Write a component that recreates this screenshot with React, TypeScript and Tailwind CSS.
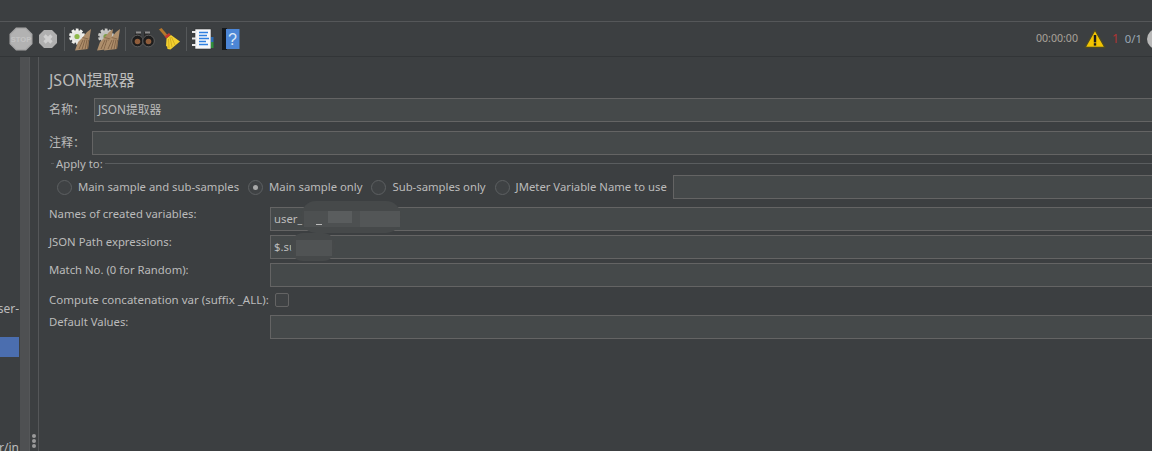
import React from "react";

const font = { fontFamily: '"Noto Sans","Noto Sans CJK SC",sans-serif' };

function Stop() {
  return (
    <svg width="24" height="24" viewBox="0 0 24 24">
      <polygon points="7,0.5 17,0.5 23.5,7 23.5,17 17,23.5 7,23.5 0.5,17 0.5,7" fill="#a6a6a6" />
      <polygon points="7.5,2 16.5,2 22,7.5 22,16.5 16.5,22 7.5,22 2,16.5 2,7.5" fill="#b2b2b2" />
      <text x="12" y="15" textAnchor="middle" fontSize="7.5" fontWeight="700" fill="#c4c4c4" fontFamily="Liberation Sans">STOP</text>
    </svg>
  );
}
function Shut() {
  return (
    <svg width="20" height="20" viewBox="0 0 20 20">
      <polygon points="6,1 14,1 19,6 19,14 14,19 6,19 1,14 1,6" fill="#b0b0b0" />
      <path d="M6.5 6.5l7 7M13.5 6.5l-7 7" stroke="#cfcfcf" strokeWidth="3.2" />
    </svg>
  );
}
function BroomShape({ dx = 0 }: { dx?: number }) {
  return (
    <g transform={`translate(${dx} 0)`}>
      <path d="M23 2l-1.5 9.5L20 22 7 23.5 10 15l4.5-4.5L19 5z" fill="#ae8e6b" />
      <path d="M11 22l4-9M14 22.5l3-10M17 22.5l2-10M19.5 22l1-9" stroke="#7d6044" strokeWidth="0.9" />
      <path d="M14.5 10.5l6 1.5" stroke="#8a6b4c" strokeWidth="1" />
    </g>
  );
}
function GearBroom({ double }: { double?: boolean }) {
  const op = double ? 0.78 : 1;
  return (
    <svg width="24" height="24" viewBox="0 0 24 24">
      <g opacity={op}>
        <circle cx="9" cy="9.5" r="6.5" fill="#e6e6e2" stroke="#f0f0ec" strokeWidth="3" strokeDasharray="2.6 1.5" />
        <circle cx="9" cy="9.5" r="2.6" fill="#8fb94a" />
      </g>
      {double && <BroomShape dx={-7} />}
      <BroomShape />
    </svg>
  );
}
function Binoculars() {
  return (
    <svg width="24" height="24" viewBox="0 0 24 24">
      <path d="M5 5h5v5h3V5h5l3 8H2z" fill="#2a2a2a" />
      <rect x="5" y="4.5" width="5" height="2" fill="#8b8b8b" />
      <rect x="14" y="4.5" width="5" height="2" fill="#8b8b8b" />
      <circle cx="6.5" cy="14" r="5.8" fill="#1d1d1d" stroke="#6a6a6a" strokeWidth="0.8" />
      <circle cx="17.5" cy="14" r="5.8" fill="#1d1d1d" stroke="#6a6a6a" strokeWidth="0.8" />
      <circle cx="6.5" cy="14.5" r="2.8" fill="#8f5d3b" />
      <circle cx="17.5" cy="14.5" r="2.8" fill="#8f5d3b" />
    </svg>
  );
}
function Broom() {
  return (
    <svg width="24" height="24" viewBox="0 0 24 24">
      <path d="M2 2.5l2.5-1.5 6 7-2.2 1.8z" fill="#b5772d" />
      <path d="M7.5 9.5l4.5-3.5 1.8 2-4.5 3.6z" fill="#c8382e" />
      <path d="M9.5 11.5l4.5-3.5 9 6.5-9.5 8-3-.5-.5-3-1 .5z" fill="#f2cf2e" />
      <path d="M12 21l-.5-9M15 20l-2-10M18 18l-3.5-8" stroke="#c9a41d" strokeWidth="0.8" />
    </svg>
  );
}
function Notebook() {
  return (
    <svg width="22" height="22" viewBox="0 0 22 22">
      <rect x="3" y="1" width="16" height="20" fill="#f5f7fa" stroke="#333" strokeWidth="0.6" />
      <rect x="19" y="9" width="2.5" height="5" fill="#2a6bb5" />
      <rect x="19" y="14" width="2.5" height="6" fill="#2f8f3c" />
      <path d="M7 4.5h9M7 7.5h8M7 10.5h10M7 13.5h7M7 16.5h9" stroke="#2f80e0" strokeWidth="1.3" />
      <path d="M0 4h5M0 10.5h5M0 17h5" stroke="#e8e8e8" strokeWidth="2" />
    </svg>
  );
}
function Help() {
  return (
    <svg width="18" height="22" viewBox="0 0 18 22">
      <rect x="0" y="0" width="5" height="22" fill="#15191d" />
      <rect x="4" y="1" width="13.5" height="20" fill="#4c86d6" />
      <text x="10.5" y="17" textAnchor="middle" fontSize="16" fill="#dbe8f8" fontFamily="Liberation Sans">?</text>
    </svg>
  );
}
function Warn() {
  return (
    <svg width="22" height="20" viewBox="0 0 22 20">
      <path d="M11 1L21 18.5H1z" fill="#f2c400" stroke="#4c4a25" strokeWidth="1.4" strokeLinejoin="round" />
      <rect x="9.8" y="6" width="2.4" height="7.4" fill="#1c1c1c" />
      <rect x="9.8" y="14.2" width="2.4" height="2.4" fill="#1c1c1c" />
    </svg>
  );
}

const Sep = () => <div className="w-px h-[24px] bg-[#55585a]" />;

function Radio({ on, label }: { on?: boolean; label: string }) {
  return (
    <div className="flex items-center gap-[6px] shrink-0">
      <div className="w-[15px] h-[15px] rounded-full border border-[#5d6062] bg-[#3f4244] flex items-center justify-center">
        {on && <div className="w-[5px] h-[5px] rounded-full bg-[#a8a8a8]" />}
      </div>
      <span>{label}</span>
    </div>
  );
}

const Field = ({ className, children }: { className?: string; children?: React.ReactNode }) => (
  <div className={"relative border border-[#646464] bg-[#45494a] flex items-center pl-[3px] text-[#bbbbbb] " + (className ?? "")}>
    {children}
  </div>
);

function Row({ label, children, mb }: { label: string; children?: React.ReactNode; mb: string }) {
  return (
    <div className={"flex items-start h-[24px] " + mb}>
      <div className="w-[221px] shrink-0 leading-[14px]">{label}</div>
      <Field className="flex-1 h-[24px]">{children}</Field>
    </div>
  );
}

export default function App() {
  return (
    <div style={font} className="w-[1152px] h-[451px] overflow-hidden bg-[#3c3f41] text-[#bbbbbb] text-[11.3px] flex flex-col">
      <div className="h-[22px] shrink-0 border-b border-[#555759]" />
      <div className="h-[35px] shrink-0 border-b border-[#323537] flex items-center pl-[9px]">
        <Stop />
        <div className="ml-[5px]"><Shut /></div>
        <div className="ml-[6px]"><Sep /></div>
        <div className="ml-[3px]"><GearBroom /></div>
        <div className="ml-[5px]"><GearBroom double /></div>
        <div className="ml-[4px]"><Sep /></div>
        <div className="ml-[5px]"><Binoculars /></div>
        <div className="ml-[2px]"><Broom /></div>
        <div className="ml-[5px]"><Sep /></div>
        <div className="ml-[5px]"><Notebook /></div>
        <div className="ml-[8px]"><Help /></div>
        <div className="ml-auto flex items-center">
          <span className="text-[10.6px] text-[#a8a29a]">00:00:00</span>
          <div className="ml-[6px]"><Warn /></div>
          <span className="ml-[6px] text-[12px] text-[#b33333]">1</span>
          <span className="ml-[6px] text-[#9aa7b4]">0/1</span>
          <div className="ml-[5px] w-[20px] h-[20px] rounded-full bg-[#b9b9b9] mr-[-15px]" />
        </div>
      </div>
      <div className="flex-1 flex min-h-0">
        <div className="w-[19px] shrink-0 overflow-hidden flex flex-col items-end pt-[243px] whitespace-nowrap text-[12px]">
          <div className="h-[18px] leading-[18px] text-right">ser-</div>
          <div className="h-[20px] w-full bg-[#4b6eaf] mt-[19px] shrink-0" />
          <div className="h-[18px] leading-[18px] text-right mt-[82px] shrink-0">r/in</div>
        </div>
        <div className="w-px shrink-0 bg-[#3c3f41]" />
        <div className="w-[9px] shrink-0 bg-[#4e5052]" />
        <div className="w-px shrink-0 bg-[#555759]" />
        <div className="w-[8px] shrink-0 flex flex-col items-center justify-end gap-[1px] pb-[3px]">
          <div className="w-[4px] h-[4px] rounded-full bg-[#9a9a9a]" />
          <div className="w-[4px] h-[4px] rounded-full bg-[#9a9a9a]" />
          <div className="w-[4px] h-[4px] rounded-full bg-[#9a9a9a]" />
        </div>
        <div className="w-px shrink-0 bg-[#555759]" />
        <div className="flex-1 min-w-0 pl-[10px] mr-[-4px] pt-[12px]">
          <div className="text-[16px] leading-[22px] h-[22px] mb-[7px]">JSON提取器</div>
          <div className="flex items-center h-[24px] mb-[9px] text-[12px]">
            <div className="w-[45px] shrink-0">名称：</div>
            <Field className="flex-1 h-[24px] text-[11.8px]">JSON提取器</Field>
          </div>
          <div className="flex items-center h-[24px] text-[12px]">
            <div className="w-[43px] shrink-0">注释：</div>
            <Field className="flex-1 h-[24px]" />
          </div>
          <div className="relative h-[20px]">
            <div className="absolute left-[2px] right-0 top-[8px] h-px bg-[#5a5d5f]" />
            <div className="absolute left-[5px] top-0 h-[18px] leading-[18px] bg-[#3c3f41] px-[2px]">Apply to:</div>
          </div>
          <div className="flex items-center h-[24px] mb-[8px] pl-[8px] gap-[9px]">
            <Radio label="Main sample and sub-samples" />
            <Radio on label="Main sample only" />
            <Radio label="Sub-samples only" />
            <Radio label="JMeter Variable Name to use" />
            <Field className="flex-1 h-[24px] -ml-[3px]" />
          </div>
          <Row label="Names of created variables:" mb="mb-[4px]">
            user_
            <div className="absolute left-[30px] top-[-7px] w-[100px] h-[32px] bg-[#46494a] rounded-[15px]" />
            <div className="absolute left-[33px] top-[3px] w-[96px] h-[16px] bg-[#4d5051]" />
            <div className="absolute left-[45px] top-[16px] w-[6px] h-px bg-[#bbbbbb]" />
            <div className="absolute left-[57px] top-[3px] w-[24px] h-[12px] bg-[#5a5d5e]" />
            <div className="absolute left-[89px] top-[3px] w-[40px] h-[16px] bg-[#535657]" />
          </Row>
          <Row label="JSON Path expressions:" mb="mb-[4px]">
            $.su
            <div className="absolute left-[20px] top-[-3px] w-[44px] h-[28px] bg-[#46494a] rounded-[12px]" />
            <div className="absolute left-[25px] top-[4px] w-[36px] h-[16px] bg-[#505354]" />
          </Row>
          <Row label="Match No. (0 for Random):" mb="mb-[4px]" />
          <div className="flex items-center h-[18px] mb-[6px] text-[11.5px]">
            <div className="shrink-0">Compute concatenation var (suffix _ALL):</div>
            <div className="ml-[6px] w-[14px] h-[14px] rounded-[2px] border border-[#646464] bg-[#3f4244]" />
          </div>
          <Row label="Default Values:" mb="" />
        </div>
      </div>
    </div>
  );
}
